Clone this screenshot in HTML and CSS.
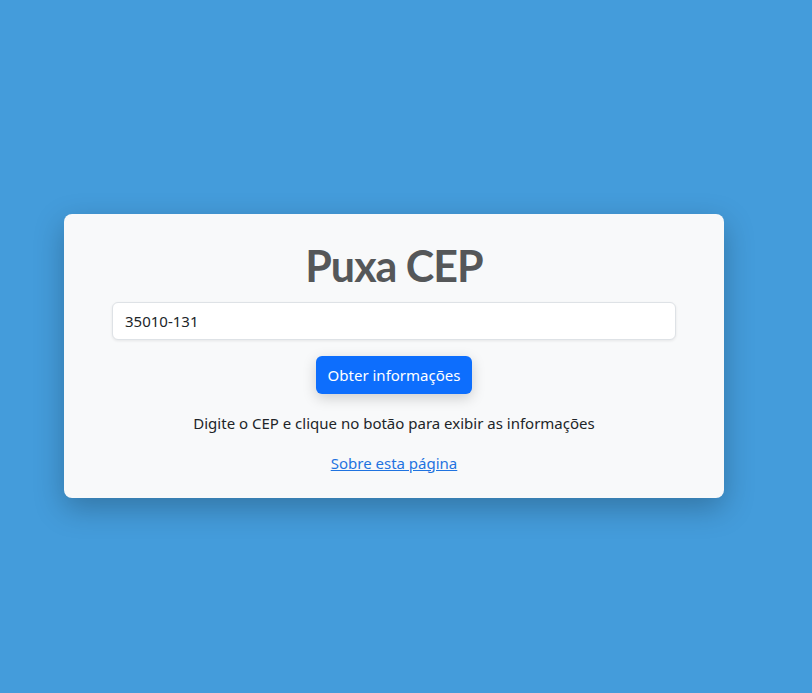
FILE: index.html
```html
<!DOCTYPE html>
<html lang="pt-BR">
<head>
<meta charset="utf-8">
<title>Puxa CEP</title>
<link rel="stylesheet" href="styles.css">
</head>
<body>
<main class="card">
  <h1 class="title">Puxa CEP</h1>
  <input class="cep-input" type="text" value="35010-131">
  <button class="btn" type="button">Obter informações</button>
  <p class="info">Digite o CEP e clique no botão para exibir as informações</p>
  <a class="about" href="#">Sobre esta página</a>
</main>
</body>
</html>
```
FILE: styles.css
```css
html, body {
  margin: 0;
  padding: 0;
}
body {
  background: #449cdb;
  min-height: 693px;
  font-family: "Noto Sans", "Open Sans", sans-serif;
  color: #212529;
  display: flex;
  flex-direction: column;
  align-items: flex-start;
}
.card {
  box-sizing: border-box;
  width: 660px;
  margin: 214px 0 0 64px;
  padding: 26px 48px 23px;
  background: #f8f9fa;
  border-radius: 8px;
  box-shadow: 0 10px 30px rgba(0, 0, 0, 0.25);
  display: flex;
  flex-direction: column;
  align-items: center;
}
.title {
  margin: 0 0 10px;
  font-family: Lato, "Noto Sans", sans-serif;
  font-size: 43px;
  line-height: 1.2;
  font-weight: 700;
  letter-spacing: -1px;
  color: #555759;
}
.cep-input {
  box-sizing: border-box;
  width: 100%;
  height: 38px;
  padding: 0 12px;
  font-family: inherit;
  font-size: 15px;
  color: #212529;
  background: #fff;
  border: 1px solid #dee2e6;
  border-radius: 6px;
  box-shadow: 0 1px 3px rgba(0, 0, 0, 0.08);
  outline: none;
}
.btn {
  margin-top: 16px;
  height: 38px;
  padding: 0 12px;
  font-family: inherit;
  font-size: 15px;
  color: #fff;
  background: #0d6efd;
  border: none;
  border-radius: 6px;
  box-shadow: 0 4px 14px rgba(0, 0, 0, 0.18);
}
.info {
  margin: 17px 0 0;
  font-size: 15px;
  line-height: 24px;
}
.about {
  margin-top: 16px;
  font-size: 15px;
  line-height: 24px;
  color: #1f73e0;
}
```
